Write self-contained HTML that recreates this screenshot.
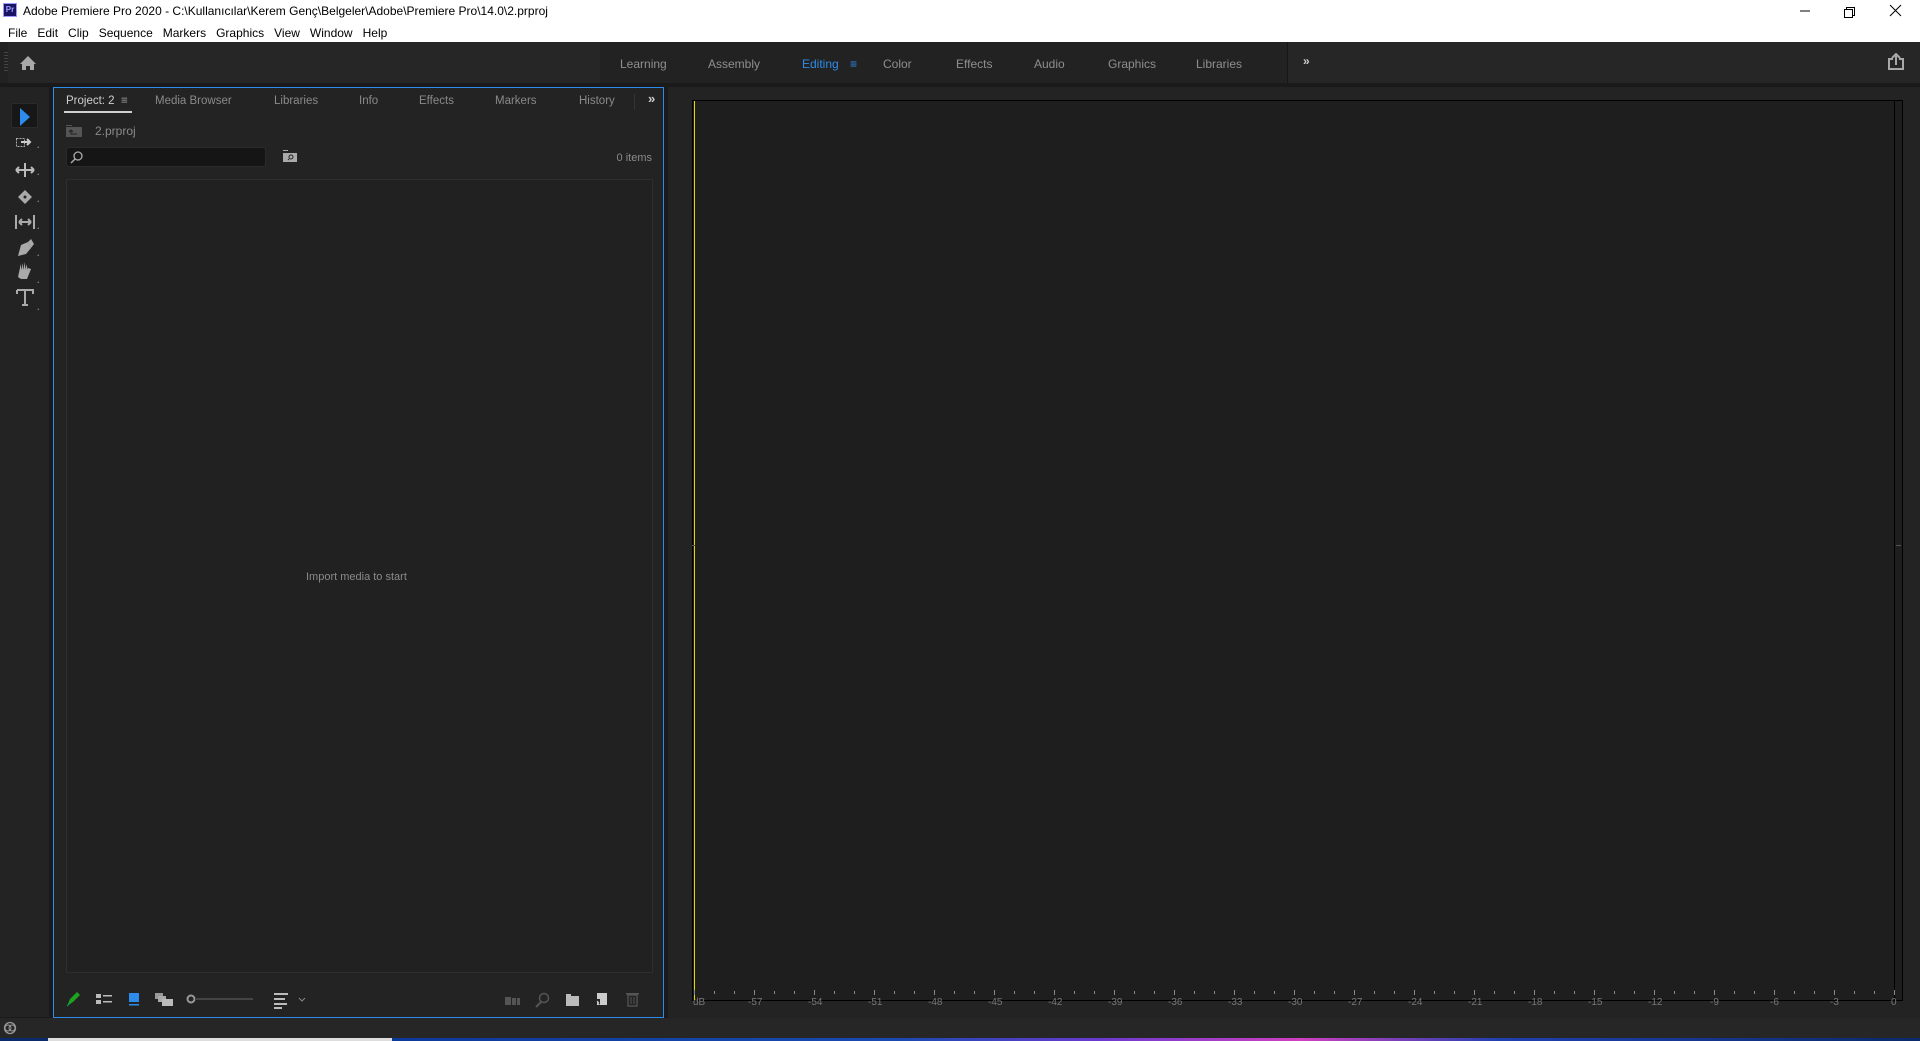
<!DOCTYPE html>
<html><head><meta charset="utf-8"><style>
*{margin:0;padding:0;box-sizing:border-box}
body{width:1920px;height:1041px;overflow:hidden;background:#1a1a1a;font-family:"Liberation Sans",sans-serif;position:relative}
.a{position:absolute}
.t{position:absolute;white-space:nowrap}
#title{left:0;top:0;width:1920px;height:42px;background:#fff}
#hdr{left:0;top:42px;width:1920px;height:41px;background:#262626}
.ws{font-size:12px;color:#8f8f8f;top:57px}
.tab{font-size:11.5px;color:#8a8a8a;top:95px}
.db{font-size:10px;color:#777;top:997px}
</style></head><body>
<div class="a" id="title"></div>
<div class="a" style="left:3px;top:3px;width:14px;height:14px;background:#1b1464;border:1px solid #9999ff;color:#9f9fff;font-size:8px;font-weight:bold;line-height:12px;text-align:center">Pr</div>
<div class="t" style="left:23px;top:4px;font-size:12px;color:#000">Adobe Premiere Pro 2020 - C:\Kullanıcılar\Kerem Genç\Belgeler\Adobe\Premiere Pro\14.0\2.prproj</div>
<div class="t" style="left:8px;top:26px;font-size:12px;color:#000;word-spacing:0">
<span style="margin-right:10px">File</span><span style="margin-right:10px">Edit</span><span style="margin-right:10px">Clip</span><span style="margin-right:10px">Sequence</span><span style="margin-right:10px">Markers</span><span style="margin-right:10px">Graphics</span><span style="margin-right:10px">View</span><span style="margin-right:10px">Window</span><span>Help</span></div>
<svg class="a" style="left:1795px;top:4px" width="120" height="16"><path d="M5 7H15" stroke="#000"/><rect x="49.5" y="5.5" width="8" height="8" fill="none" stroke="#000"/><path d="M51.5 5.5V3.5H59.5V11.5H57.5" fill="none" stroke="#000"/><path d="M95 1L106 12M106 1L95 12" stroke="#000"/></svg>

<div class="a" id="hdr"></div>
<div class="a" style="left:0;top:42px;width:8px;height:41px;background:#222"></div>
<div class="a" style="left:600px;top:42px;width:687px;height:41px;background:#222"></div>
<div class="a" style="left:1287px;top:42px;width:1px;height:41px;background:#161616"></div>
<svg class="a" style="left:4px;top:52px" width="6" height="22"><g fill="#444"><rect y="0" width="4" height="1"/><rect y="3" width="4" height="1"/><rect y="6" width="4" height="1"/><rect y="9" width="4" height="1"/><rect y="12" width="4" height="1"/><rect y="15" width="4" height="1"/><rect y="18" width="4" height="1"/></g></svg>
<svg class="a" style="left:19px;top:55px" width="18" height="16"><path d="M9 1L17 9H15V15H11V11H7V15H3V9H1Z" fill="#a8a8a8"/></svg>
<div class="t ws" style="left:620px">Learning</div>
<div class="t ws" style="left:708px">Assembly</div>
<div class="t ws" style="left:802px;color:#2d8ceb">Editing</div>
<div class="t ws" style="left:850px;color:#2d8ceb">≡</div>
<div class="t ws" style="left:883px">Color</div>
<div class="t ws" style="left:956px">Effects</div>
<div class="t ws" style="left:1034px">Audio</div>
<div class="t ws" style="left:1108px">Graphics</div>
<div class="t ws" style="left:1196px">Libraries</div>
<div class="t ws" style="left:1303px;color:#ccc;font-weight:bold;top:54px">»</div>
<svg class="a" style="left:1887px;top:53px" width="18" height="18"><path d="M6 6H2V16H16V6H12" fill="none" stroke="#a8a8a8" stroke-width="2"/><path d="M9 12V2M5 5L9 1L13 5" fill="none" stroke="#a8a8a8" stroke-width="2"/></svg>

<!-- left toolbar -->
<div class="a" style="left:0;top:87px;width:50px;height:930px;background:#232323;border-right:1px solid #1a1a1a"></div>
<div class="a" style="left:11px;top:103px;width:27px;height:25px;background:#171717;border:1px solid #2a2a2a;border-radius:2px"></div>
<svg class="a" style="left:0;top:87px" width="50" height="240">
<path d="M20 21V39L30 30Z" fill="#2d8ceb"/>
<rect x="16.5" y="51.5" width="8" height="8" fill="none" stroke="#aaa" stroke-dasharray="2 1"/><path d="M21 55H30M27 52L30 55L27 58" fill="none" stroke="#ccc" stroke-width="2"/>
<path d="M25 76V90M16 83H34M16 83L19 80M16 83L19 86M34 83L31 80M34 83L31 86" fill="none" stroke="#bbb" stroke-width="2"/>
<path d="M18 110L25 103L32 110L25 117Z" fill="#aaa"/><circle cx="25" cy="110" r="1.5" fill="#232323"/>
<path d="M16 128V142M34 128V142M19 135H31M19 135L22 132M19 135L22 138M31 135L28 132M31 135L28 138" fill="none" stroke="#aaa" stroke-width="2"/>
<path d="M18 169L21 158L28 155L31 161L26 167Z" fill="#aaa"/><path d="M28 155L31 152L34 157L31 161" fill="#aaa"/>
<path d="M18 190L20 181V177L22 183V176L24 183V175L26 183V177L28 183V181L31 182L27 192H21Z" fill="#aaa"/>
<path d="M17 203H33V207M17 203V207M25 203V218M22 218H28" fill="none" stroke="#aaa" stroke-width="2"/>
<g fill="#777"><path d="M37 61h2v-2z"/><path d="M37 88h2v-2z"/><path d="M37 115h2v-2z"/><path d="M37 142h2v-2z"/><path d="M37 169h2v-2z"/><path d="M37 196h2v-2z"/><path d="M37 223h2v-2z"/></g>
</svg>

<!-- project panel -->
<div class="a" style="left:53px;top:87px;width:611px;height:931px;background:#232323;border:1px solid #2d8ceb"></div>
<div class="t tab" style="left:66px;color:#cfcfcf">Project: 2</div>
<div class="t tab" style="left:121px;color:#aaa">≡</div>
<div class="a" style="left:64px;top:111px;width:68px;height:2px;background:#cfcfcf"></div>
<div class="t tab" style="left:155px">Media Browser</div>
<div class="t tab" style="left:274px">Libraries</div>
<div class="t tab" style="left:359px">Info</div>
<div class="t tab" style="left:419px">Effects</div>
<div class="t tab" style="left:495px">Markers</div>
<div class="t tab" style="left:579px">History</div>
<div class="a" style="left:634px;top:94px;width:1px;height:16px;background:#333"></div>
<div class="t tab" style="left:648px;top:91px;color:#ccc;font-weight:bold;font-size:13px">»</div>
<svg class="a" style="left:66px;top:125px" width="18" height="14"><rect x="0" y="2" width="16" height="10" fill="#555"/><rect x="0" y="0" width="6" height="1" fill="#555"/><path d="M5 5V9H11M3 7L5 5L7 7" fill="none" stroke="#222"/></svg>
<div class="t" style="left:95px;top:124px;font-size:12px;color:#8a8a8a">2.prproj</div>
<div class="a" style="left:66px;top:147px;width:200px;height:20px;background:#151515;border:1px solid #2b2b2b;border-radius:3px"></div>
<svg class="a" style="left:70px;top:150px" width="14" height="14"><circle cx="8" cy="6" r="4" fill="none" stroke="#aaa" stroke-width="1.3"/><path d="M5 9L1 13" stroke="#aaa" stroke-width="1.5"/></svg>
<svg class="a" style="left:283px;top:150px" width="16" height="14"><rect x="0" y="3" width="14" height="9" fill="#aaa"/><rect y="0" width="5" height="1" fill="#aaa"/><circle cx="8" cy="7" r="2" fill="none" stroke="#222"/><path d="M6 9L5 10" stroke="#222"/></svg>
<div class="t" style="right:1268px;top:152px;font-size:11px;color:#8a8a8a">0 items</div>
<div class="a" style="left:66px;top:179px;width:587px;height:794px;background:#212121;border:1px solid #2e2e2e"></div>
<div class="t" style="left:306px;top:571px;font-size:11px;color:#8a8a8a">Import media to start</div>
<svg class="a" style="left:60px;top:987px" width="260" height="24">
<path d="M7 19L10 12L17 5L20 8L13 15Z" fill="#1ea31e"/><path d="M7 19L10 16" stroke="#0a5" />
<rect x="36" y="7" width="5" height="4" fill="#bbb"/><rect x="36" y="13" width="5" height="4" fill="#bbb"/><rect x="43" y="8" width="9" height="1.5" fill="#bbb"/><rect x="43" y="14" width="9" height="1.5" fill="#bbb"/>
<rect x="69" y="6" width="10" height="9" fill="#2d8ceb"/><rect x="69" y="17" width="10" height="1.5" fill="#2d8ceb"/>
<rect x="95" y="6" width="8" height="6" fill="#999"/><rect x="98" y="9" width="8" height="6" fill="#aaa"/><rect x="102" y="12" width="11" height="7" fill="#bbb"/>
<circle cx="131" cy="12" r="3.5" fill="none" stroke="#999" stroke-width="2"/><rect x="135" y="11" width="58" height="2" fill="#444"/>
<rect x="214" y="6" width="14" height="2" fill="#bbb"/><rect x="214" y="11" width="11" height="2" fill="#bbb"/><rect x="214" y="16" width="13" height="2" fill="#bbb"/><rect x="214" y="20" width="8" height="2" fill="#bbb"/>
<path d="M239 11L242 14L245 11" fill="none" stroke="#888"/>
</svg>
<svg class="a" style="left:500px;top:987px" width="150" height="24">
<rect x="5" y="10" width="6" height="8" fill="#555"/><rect x="12" y="11" width="4" height="7" fill="#555"/><rect x="17" y="11" width="3" height="7" fill="#555"/>
<circle cx="44" cy="11" r="4.5" fill="none" stroke="#555" stroke-width="1.5"/><path d="M41 15L36 20" stroke="#555" stroke-width="2"/>
<rect x="66" y="7" width="5" height="2" fill="#bbb"/><rect x="66" y="9" width="13" height="10" fill="#bbb"/>
<rect x="97" y="6" width="10" height="12" fill="#ccc"/><path d="M95 12H100V18" fill="#232323"/><path d="M97 14L99 16" stroke="#ccc"/>
<rect x="128" y="8" width="9" height="11" fill="none" stroke="#555" stroke-width="1.3"/><rect x="126" y="6" width="13" height="1.5" fill="#555"/><path d="M131 10V17M134 10V17" stroke="#555"/>
</svg>

<!-- right panel -->
<div class="a" style="left:668px;top:87px;width:1252px;height:931px;background:#232323"></div>
<div class="a" style="left:692px;top:100px;width:1211px;height:901px;background:#1e1e1e;border:1px solid #000"></div>
<div class="a" style="left:1894px;top:100px;width:1px;height:901px;background:#000"></div>
<div class="a" style="left:694px;top:101px;width:1px;height:899px;background:#e5d500"></div>
<div class="a" style="left:692px;top:545px;width:3px;height:1px;background:#555"></div>
<div class="a" style="left:1896px;top:545px;width:5px;height:1px;background:#555"></div>
<div class="t db" style="left:693px">dB</div>
<div class="t db" style="left:748px">-57</div><div class="t db" style="left:808px">-54</div><div class="t db" style="left:868px">-51</div><div class="t db" style="left:928px">-48</div><div class="t db" style="left:988px">-45</div><div class="t db" style="left:1048px">-42</div><div class="t db" style="left:1108px">-39</div><div class="t db" style="left:1168px">-36</div><div class="t db" style="left:1228px">-33</div><div class="t db" style="left:1288px">-30</div><div class="t db" style="left:1348px">-27</div><div class="t db" style="left:1408px">-24</div><div class="t db" style="left:1468px">-21</div><div class="t db" style="left:1528px">-18</div><div class="t db" style="left:1588px">-15</div><div class="t db" style="left:1648px">-12</div><div class="t db" style="left:1710px">-9</div><div class="t db" style="left:1770px">-6</div><div class="t db" style="left:1830px">-3</div><div class="t db" style="left:1891px">0</div>
<svg class="a" style="left:690px;top:990px" width="1215" height="6"><g stroke="#888">
<path d="M4.5 0v5M24.5 1v3M44.5 1v3M64.5 0v5M84.5 1v3M104.5 1v3M124.5 0v5M144.5 1v3M164.5 1v3M184.5 0v5M204.5 1v3M224.5 1v3M244.5 0v5M264.5 1v3M284.5 1v3M304.5 0v5M324.5 1v3M344.5 1v3M364.5 0v5M384.5 1v3M404.5 1v3M424.5 0v5M444.5 1v3M464.5 1v3M484.5 0v5M504.5 1v3M524.5 1v3M544.5 0v5M564.5 1v3M584.5 1v3M604.5 0v5M624.5 1v3M644.5 1v3M664.5 0v5M684.5 1v3M704.5 1v3M724.5 0v5M744.5 1v3M764.5 1v3M784.5 0v5M804.5 1v3M824.5 1v3M844.5 0v5M864.5 1v3M884.5 1v3M904.5 0v5M924.5 1v3M944.5 1v3M964.5 0v5M984.5 1v3M1004.5 1v3M1024.5 0v5M1044.5 1v3M1064.5 1v3M1084.5 0v5M1104.5 1v3M1124.5 1v3M1144.5 0v5M1164.5 1v3M1184.5 1v3M1204.5 0v5"/></g></svg>

<!-- status bar -->
<div class="a" style="left:0;top:1018px;width:1920px;height:20px;background:#262626"></div>
<svg class="a" style="left:2px;top:1021px" width="16" height="14"><circle cx="8" cy="7" r="5.5" fill="none" stroke="#999" stroke-width="1.3"/><circle cx="6" cy="7" r="3" fill="none" stroke="#999"/><circle cx="10" cy="7" r="3" fill="none" stroke="#999"/></svg>
<div class="a" style="left:0;top:1038px;width:1920px;height:3px;background:linear-gradient(90deg,#0a2a6a 0,#0a2a6a 48px,#ddd 48px,#ddd 392px,#0c3a9a 392px,#1a4ab0 900px,#6a3ad0 1100px,#d040c0 1300px,#2040b0 1500px,#0a2a6a 100%)"></div>
</body></html>
